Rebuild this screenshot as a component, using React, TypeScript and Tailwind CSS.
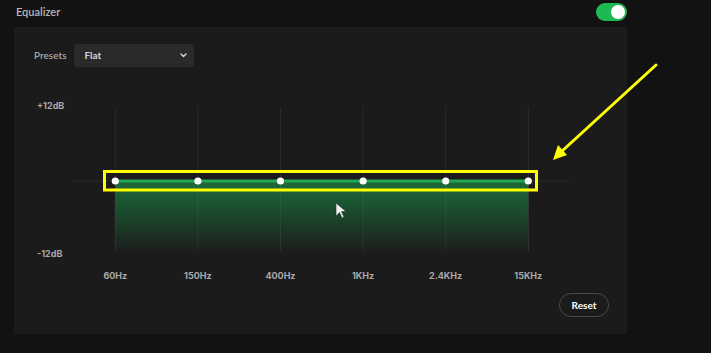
import React from "react";

const freqs = ["60Hz", "150Hz", "400Hz", "1KHz", "2.4KHz", "15KHz"];
const step = 82.6;

function Chart() {
  const xs = freqs.map((_, i) => step / 2 + i * step);
  return (
    <svg width={496} height={160} className="block">
      <defs>
        <linearGradient id="fill" x1="0" y1="0" x2="0" y2="1">
          <stop offset="0" stopColor="#1e6a3b" />
          <stop offset="0.45" stopColor="#1a4a2c" />
          <stop offset="1" stopColor="#1b1d1c" />
        </linearGradient>
      </defs>
      <line x1={0} y1={81} x2={496} y2={81} stroke="#2c2c2c" strokeWidth={1} />
      {xs.map((x, i) => (
        <line key={i} x1={x} y1={7} x2={x} y2={152} stroke="#2b2b2b" strokeWidth={1} />
      ))}
      <rect x={xs[0]} y={81} width={xs[5] - xs[0]} height={71} fill="url(#fill)" />
      {xs.map((x, i) => (
        <line key={"g" + i} x1={x} y1={84} x2={x} y2={152} stroke="#ffffff" strokeOpacity={0.06} strokeWidth={1} />
      ))}
      <rect x={xs[0]} y={79.5} width={xs[5] - xs[0]} height={3} fill="#22a552" />
      {xs.map((x, i) => (
        <circle key={"c" + i} cx={x} cy={81} r={3.6} fill="#ffffff" />
      ))}
    </svg>
  );
}

const axis = "text-[9px] leading-[12px] font-bold text-[#a8a8a8] font-['Inter',sans-serif]";

export default function App() {
  return (
    <div
      className="relative w-[711px] h-[353px] overflow-hidden bg-[#121212]"
      style={{ fontFamily: "Lato, 'Open Sans', sans-serif" }}
    >
      <div className="flex items-center justify-between h-[27px] pl-[16px] pr-[84px] pb-[3px]">
        <span className="text-[11px] font-semibold text-[#b8b8b8]">Equalizer</span>
        <div className="flex items-center justify-end w-[31px] h-[18px] rounded-full bg-[#1db954] pr-[2px]">
          <div className="w-[14px] h-[14px] rounded-full bg-white" />
        </div>
      </div>
      <div className="ml-[14px] w-[613px] h-[307px] bg-[#1b1b1b] pt-[17px] pl-[20px] flex flex-col">
        <div className="flex items-center gap-[7px] h-[23px]">
          <span className="text-[10px] font-semibold text-[#a8a8a8]">Presets</span>
          <div className="flex items-center justify-between w-[120px] h-[23px] rounded-[3px] bg-[#2a2a2a] pl-[11px] pr-[7px]">
            <span className="text-[10px] font-bold text-[#d8d8d8]">Flat</span>
            <svg width="7" height="5" viewBox="0 0 7 5">
              <path d="M1 1 L3.5 3.5 L6 1" stroke="#d0d0d0" strokeWidth="1.5" fill="none" strokeLinecap="round" />
            </svg>
          </div>
        </div>
        <div className="flex mt-[33px]">
          <div className="w-[40px] h-[160px] pl-[3px] flex flex-col justify-between">
            <span className={axis}>+12dB</span>
            <span className={axis}>-12dB</span>
          </div>
          <Chart />
        </div>
        <div className="flex ml-[40px] mt-[10px]">
          {freqs.map((f) => (
            <span key={f} className={"w-[82.6px] text-center " + axis}>
              {f}
            </span>
          ))}
        </div>
        <div className="flex justify-end pr-[18px] mt-[11px]">
          <button className="w-[50px] h-[24px] rounded-full border border-[#4a4a4a] text-[10px] font-bold text-white bg-transparent">
            Reset
          </button>
        </div>
      </div>
      <svg className="absolute inset-0 pointer-events-none" width={711} height={353}>
        <rect x={104.5} y={171.5} width={432} height={18.5} fill="none" stroke="#ffff00" strokeWidth={3} />
        <line x1={656} y1={65} x2={561} y2={152} stroke="#ffff00" strokeWidth={3} strokeLinecap="round" />
        <polygon points="553,160 558,145 567,155" fill="#ffff00" />
        <path d="M336 203 L336 216 L339.5 212.5 L342 218 L344 217 L341.5 211.5 L346 211.5 Z" fill="#f2f2f2" stroke="#1a3a26" strokeWidth={0.6} />
      </svg>
    </div>
  );
}
